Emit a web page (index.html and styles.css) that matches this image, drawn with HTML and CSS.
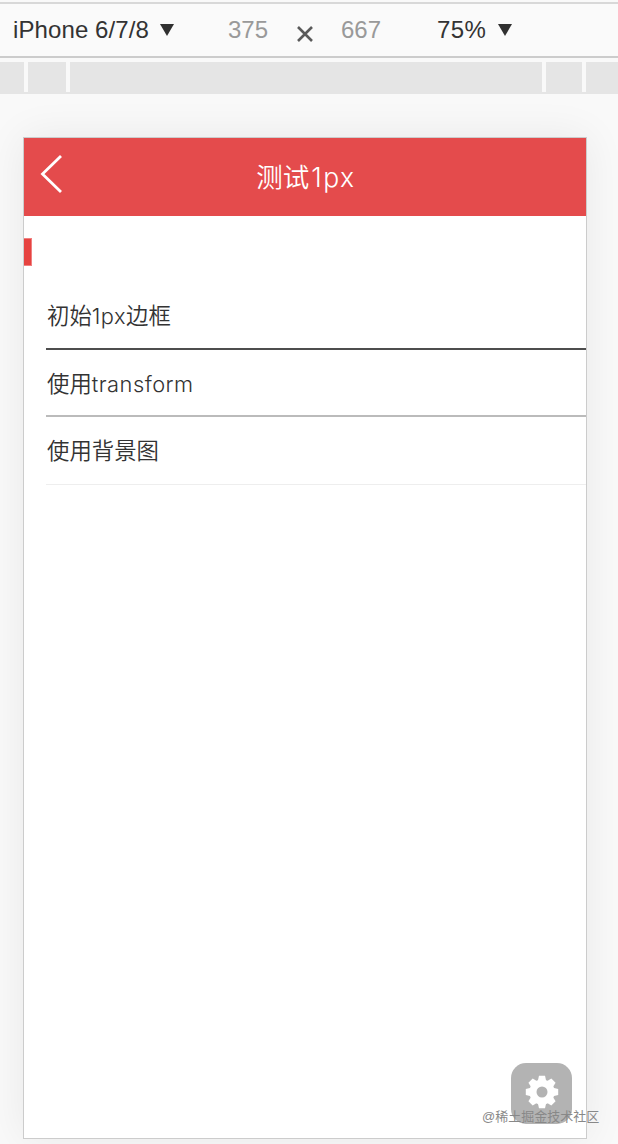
FILE: index.html
```html
<!DOCTYPE html>
<html lang="zh-CN">
<head>
  <meta charset="UTF-8">
  <meta name="viewport" content="width=device-width, initial-scale=1.0">
  <title>测试1px</title>
  <link rel="stylesheet" href="styles.css">
</head>
<body>
  <div class="toolbar">
    <span class="device">iPhone 6/7/8</span>
    <svg class="arrow" width="14" height="12" viewBox="0 0 14 12"><path d="M0 0h14L7 12z" fill="#303030"/></svg>
    <span class="size size-width">375</span>
    <svg class="times" width="16" height="16" viewBox="0 0 16 16"><path d="M1 1l14 14M15 1L1 15" stroke="#5a5a5a" stroke-width="2.6"/></svg>
    <span class="size size-height">667</span>
    <span class="zoom">75%</span>
    <svg class="arrow" width="14" height="12" viewBox="0 0 14 12"><path d="M0 0h14L7 12z" fill="#303030"/></svg>
  </div>

  <div class="ruler">
    <i></i>
    <i></i>
    <i></i>
    <i></i>
    <i></i>
  </div>

  <div class="phone">
    <div class="header">
      <svg class="back" width="22" height="38" viewBox="0 0 22 38"><path d="M21 1L2.5 19 21 37" fill="none" stroke="#fff" stroke-width="2.8"/></svg>
      <h1>测试<span>1px</span></h1>
    </div>
    <div class="mark"></div>
    <ul class="list">
      <li class="item border">初始<span>1px</span>边框</li>
      <li class="item border-transform">使用<span>transform</span></li>
      <li class="item border-image">使用背景图</li>
    </ul>
    <div class="setting">
      <svg width="34" height="34" viewBox="-17 -17 34 34">
        <g fill="#fff">
          <circle r="12.6"/>
          <path id="tooth" d="M-4.2-11L-3-16.2h6L4.2-11z"/>
          <use href="#tooth" transform="rotate(45)"/>
          <use href="#tooth" transform="rotate(90)"/>
          <use href="#tooth" transform="rotate(135)"/>
          <use href="#tooth" transform="rotate(180)"/>
          <use href="#tooth" transform="rotate(225)"/>
          <use href="#tooth" transform="rotate(270)"/>
          <use href="#tooth" transform="rotate(315)"/>
        </g>
        <circle r="5.5" fill="#b3b3b3"/>
      </svg>
    </div>
  </div>
  <div class="watermark">@稀土掘金技术社区</div>
</body>
</html>
```

FILE: styles.css
```css
* {
  box-sizing: border-box;
}
body {
  position: relative;
  height: 1144px;
  margin: 0;
  overflow: hidden;
  background-color: #f9f9f9;
  font-family: "Liberation Sans", "Noto Sans CJK SC", sans-serif;
  color: #333;
}
.toolbar {
  display: flex;
  align-items: center;
  height: 56px;
  margin-top: 2px;
  padding: 2px 0 2px 13px;
  border-top: 2px solid #d8d8d8;
  border-bottom: 2px solid #ccc;
  background-color: #fafafa;
  font-size: 24px;
  line-height: 28px;
}
.device {
  width: 138px;
  letter-spacing: 0.1px;
}
.arrow {
  margin-left: 9px;
}
.size {
  color: #999;
}
.size-width {
  width: 41px;
  margin-left: 54px;
}
.times {
  margin: 7px 0 0 28px;
}
.size-height {
  width: 41px;
  margin-left: 28px;
}
.zoom {
  width: 52px;
  margin-left: 55px;
  letter-spacing: 0.4px;
}
.ruler {
  display: grid;
  grid-template-columns: 24px 38px 472px 36px 32px;
  column-gap: 4px;
  height: 32px;
  margin-top: 4px;
  border-bottom: 2px solid #e5e5e5;
}
.ruler i {
  background-color: #e5e5e5;
}
.phone {
  position: relative;
  width: 564px;
  height: 1002px;
  margin: 43px 0 0 23px;
  border: 1px solid #ccc;
  background-color: #fff;
  box-shadow: 0 0 40px rgba(0, 0, 0, 0.07);
}
.header {
  display: flex;
  align-items: center;
  height: 78px;
  padding-left: 16px;
  background-color: #e44b4c;
}
.back {
  margin-top: -6px;
}
h1 {
  flex: 1;
  margin: 0 36px 0 0;
  color: #fff;
  font-size: 26.5px;
  font-weight: 350;
  line-height: 38px;
  text-align: center;
}
h1 span {
  margin-left: 2px;
  font-family: Inter, sans-serif;
  font-size: 26.5px;
  letter-spacing: 1.5px;
}
.mark {
  width: 8px;
  height: 28px;
  margin-top: 22px;
  border: 1px solid #f08080;
  border-left: 0;
  background-color: #e64340;
}
.list {
  margin: 16px 0 0 22px;
  padding: 0;
  list-style: none;
}
.item {
  height: 68px;
  padding-left: 1px;
  font-size: 22.4px;
  font-weight: 350;
  line-height: 68px;
}
.item span {
  font-family: Inter, sans-serif;
  font-size: 21.8px;
  letter-spacing: 0.5px;
}
.border {
  border-bottom: 2px solid #4d4d4d;
}
.border-transform {
  height: 67px;
  border-bottom: 2px solid #bbb;
}
.border-image {
  border-bottom: 1px solid #eee;
  line-height: 70px;
}
.setting {
  position: absolute;
  right: 14px;
  bottom: 14px;
  display: flex;
  align-items: center;
  justify-content: center;
  width: 61px;
  height: 61px;
  padding-bottom: 3px;
  border-radius: 15px;
  background-color: #b3b3b3;
}
.watermark {
  position: absolute;
  left: 482px;
  top: 1107px;
  color: #888;
  font-size: 13px;
  line-height: 20px;
  white-space: nowrap;
}
```
